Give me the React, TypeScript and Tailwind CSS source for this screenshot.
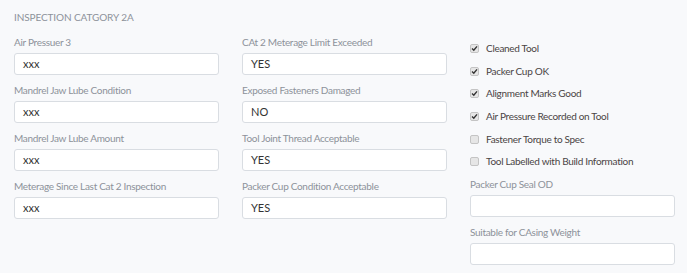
import React from "react";

const font = { fontFamily: '"Lato", "Open Sans", sans-serif' };

function Field({ label, value }: { label: string; value: string }) {
  return (
    <div className="flex flex-col">
      <div className="text-[10px] leading-[14px] tracking-[-0.3px] text-[#8d929a] h-[14px]">{label}</div>
      <div className="mt-[4px] h-[22px] bg-white border border-[#d9dde2] rounded-[3px] px-[8px] flex items-center text-[11px] text-[#333]">
        {value}
      </div>
    </div>
  );
}

function Check({ label, checked }: { label: string; checked: boolean }) {
  return (
    <div className="flex items-center h-[22.7px]">
      <div className="w-[9px] h-[9px] rounded-[2px] border border-[#c4c4c4] bg-[#e6e6e6] flex items-center justify-center">
        {checked && (
          <svg width="7" height="7" viewBox="0 0 7 7">
            <path d="M1 3.6 L2.8 5.3 L6 1.4" stroke="#333" strokeWidth="1.4" fill="none" />
          </svg>
        )}
      </div>
      <span className="ml-[7px] text-[10px] tracking-[-0.3px] text-[#4a4444]">{label}</span>
    </div>
  );
}

export default function App() {
  return (
    <div style={font} className="w-[687px] h-[273px] bg-[#f8f9fb] pl-[14px] pr-[12px] pt-[11px]">
      <div className="text-[10px] leading-[12px] text-[#8d929a] tracking-[-0.1px]">INSPECTION CATGORY 2A</div>
      <div className="grid grid-cols-3 gap-x-[23px] mt-[12px]">
        <div className="flex flex-col gap-[8px]">
          <Field label="Air Pressuer 3" value="xxx" />
          <Field label="Mandrel Jaw Lube Condition" value="xxx" />
          <Field label="Mandrel Jaw Lube Amount" value="xxx" />
          <Field label="Meterage Since Last Cat 2 Inspection" value="xxx" />
        </div>
        <div className="flex flex-col gap-[8px]">
          <Field label="CAt 2 Meterage Limit Exceeded" value="YES" />
          <Field label="Exposed Fasteners Damaged" value="NO" />
          <Field label="Tool Joint Thread Acceptable" value="YES" />
          <Field label="Packer Cup Condition Acceptable" value="YES" />
        </div>
        <div className="flex flex-col">
          <div className="flex flex-col pt-[2px]">
            <Check label="Cleaned Tool" checked />
            <Check label="Packer Cup OK" checked />
            <Check label="Alignment Marks Good" checked />
            <Check label="Air Pressure Recorded on Tool" checked />
            <Check label="Fastener Torque to Spec" checked={false} />
            <Check label="Tool Labelled with Build Information" checked={false} />
          </div>
          <div className="flex flex-col gap-[8px] mt-[4px]">
            <Field label="Packer Cup Seal OD" value="" />
            <Field label="Suitable for CAsing Weight" value="" />
          </div>
        </div>
      </div>
    </div>
  );
}
